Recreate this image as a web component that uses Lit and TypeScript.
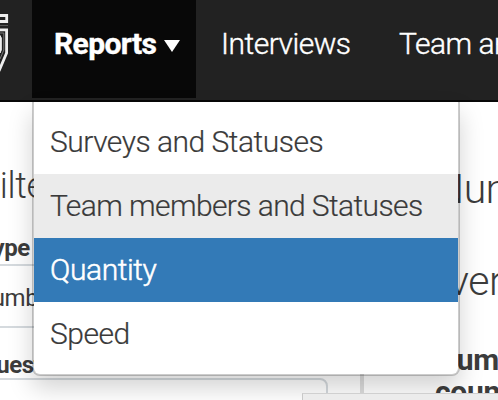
import { LitElement, html, css } from "lit";
import { customElement, property } from "lit/decorators.js";
import { classMap } from "lit/directives/class-map.js";

interface Entry {
  label: string;
  state?: "hover" | "active";
}

@customElement("nav-menu")
class NavMenu extends LitElement {
  @property({ attribute: false }) items: Entry[] = [];

  static styles = css`
    :host {
      display: block;
      box-sizing: border-box;
      width: 428px;
      padding: 8px 0;
      border: 2px solid rgba(0, 0, 0, 0.2);
      border-top: 0;
      border-radius: 0 0 8px 8px;
      background: #fff;
      background-clip: padding-box;
      box-shadow: 0 12px 24px rgba(0, 0, 0, 0.175);
    }
    .item {
      height: 64px;
      padding-left: 16px;
      line-height: 64px;
      font-size: 30px;
      font-weight: 300;
      letter-spacing: -0.5px;
      color: #3a3a3a;
      -webkit-text-stroke: 0.2px;
      white-space: nowrap;
    }
    .hover {
      background: #ebebeb;
      letter-spacing: -0.6px;
    }
    .active {
      background: #337ab7;
      color: #fff;
      letter-spacing: -0.4px;
      -webkit-text-stroke: 0.5px;
    }
  `;

  render() {
    return this.items.map(
      (i) => html`<div
        class=${classMap({ item: true, hover: i.state === "hover", active: i.state === "active" })}
      >${i.label}</div>`
    );
  }
}

@customElement("app-root")
class AppRoot extends LitElement {
  private items: Entry[] = [
    { label: "Surveys and Statuses" },
    { label: "Team members and Statuses", state: "hover" },
    { label: "Quantity", state: "active" },
    { label: "Speed" },
  ];

  static styles = css`
    :host {
      display: block;
      position: relative;
      width: 498px;
      height: 400px;
      overflow: hidden;
      background: #fff;
      color: #3c3c3c;
      font-family: Roboto, "Liberation Sans", sans-serif;
      white-space: nowrap;
    }
    .bar {
      display: flex;
      box-sizing: border-box;
      height: 102px;
      border-bottom: 2px solid #080808;
      background: #222;
      color: #fff;
      font-size: 30px;
      font-weight: 300;
      letter-spacing: -0.5px;
      line-height: 88px;
      -webkit-text-stroke: 0.4px;
    }
    .logo {
      flex: none;
      width: 32px;
      height: 98px;
    }
    .tab {
      flex: none;
      box-sizing: border-box;
      height: 98px;
      padding-left: 25px;
    }
    .current {
      display: flex;
      width: 164px;
      padding-left: 22px;
      background: #080808;
      font-weight: 700;
      letter-spacing: -0.6px;
    }
    .word {
      width: 110px;
    }
    .caret {
      margin-top: 39px;
      width: 16px;
      height: 13px;
    }
    .interviews {
      width: 178px;
    }
    .page {
      display: flex;
      height: 298px;
    }
    .filters {
      flex: none;
      width: 360px;
      overflow: hidden;
    }
    .title {
      height: 98px;
      margin: 0 0 0 -20px;
      padding-top: 63px;
      box-sizing: border-box;
      font-size: 36px;
      font-weight: 300;
      letter-spacing: -0.4px;
      line-height: 42px;
    }
    .label {
      height: 64px;
      margin-left: -21px;
      box-sizing: border-box;
      padding-top: 34px;
      font-size: 24px;
      font-weight: 700;
      letter-spacing: -0.4px;
      line-height: 28px;
    }
    .field {
      box-sizing: border-box;
      width: 348px;
      height: 64px;
      margin-left: -20px;
      border: 2px solid #d5dade;
      border-radius: 8px;
      font-size: 24px;
      line-height: 64px;
    }
    .value {
      margin-left: -7px;
      letter-spacing: -0.4px;
    }
    .ques {
      height: 50px;
      padding-top: 23px;
      margin-left: -20px;
    }
    .results {
      box-sizing: border-box;
      width: 138px;
      border-left: 4px solid #ddd;
      overflow: hidden;
    }
    .heading {
      box-sizing: border-box;
      height: 155px;
      margin-left: 71px;
      font-size: 41px;
      font-weight: 300;
      letter-spacing: -0.5px;
      line-height: 48px;
    }
    .first {
      padding-top: 63px;
    }
    .heading.second {
      height: 87px;
      margin-left: 58px;
    }
    .cells {
      width: 130px;
      margin-left: 71px;
      font-size: 30px;
      font-weight: 700;
      letter-spacing: -0.3px;
      line-height: 32px;
    }
    .cells .number {
      margin-left: 1px;
    }
    .status {
      position: absolute;
      left: 302px;
      right: 0;
      bottom: 0;
      height: 7px;
      box-sizing: border-box;
      border-top: 1px solid #d0d0d0;
      border-left: 1px solid #c8c8c8;
      background: #ececec;
    }
    nav-menu {
      position: absolute;
      left: 32px;
      top: 102px;
    }
  `;

  render() {
    return html`
      <header class="bar">
        <svg class="logo" viewBox="0 0 32 98" fill="none">
          <path d="M0 15.5H6.7V21.5H0" stroke="#eee" stroke-width="2.8" />
          <path d="M0 25.5H8" stroke="#555" stroke-width="1" />
          <path d="M0 29.8H6.6V53L-1 71" stroke="#eee" stroke-width="2.8" />
          <path d="M0 33H3.8V50L0 59" stroke="#777" stroke-width="1" />
          <path d="M0 35.5L1.3 38V50L0 53Z" fill="#eee" stroke="#eee" stroke-width="1" />
        </svg>
        <div class="tab current">
          <span class="word">Reports</span>
          <svg class="caret" viewBox="0 0 16 13"><path d="M0 1H16L8 13Z" fill="#fff" stroke="none" /></svg>
        </div>
        <div class="tab interviews">Interviews</div>
        <div class="tab">Team and roles</div>
      </header>
      <main class="page">
        <section class="filters">
          <h2 class="title">Filters</h2>
          <div class="label">Type</div>
          <div class="field"><span class="value">Number</span></div>
          <div class="label ques">Questionnaire</div>
          <div class="field"></div>
        </section>
        <section class="results">
          <div class="heading first">Number</div>
          <div class="heading second">Overall</div>
          <div class="cells"><div class="number">Number</div><div>count</div></div>
        </section>
      </main>
      <nav-menu .items=${this.items}></nav-menu>
      <div class="status"></div>
    `;
  }
}
